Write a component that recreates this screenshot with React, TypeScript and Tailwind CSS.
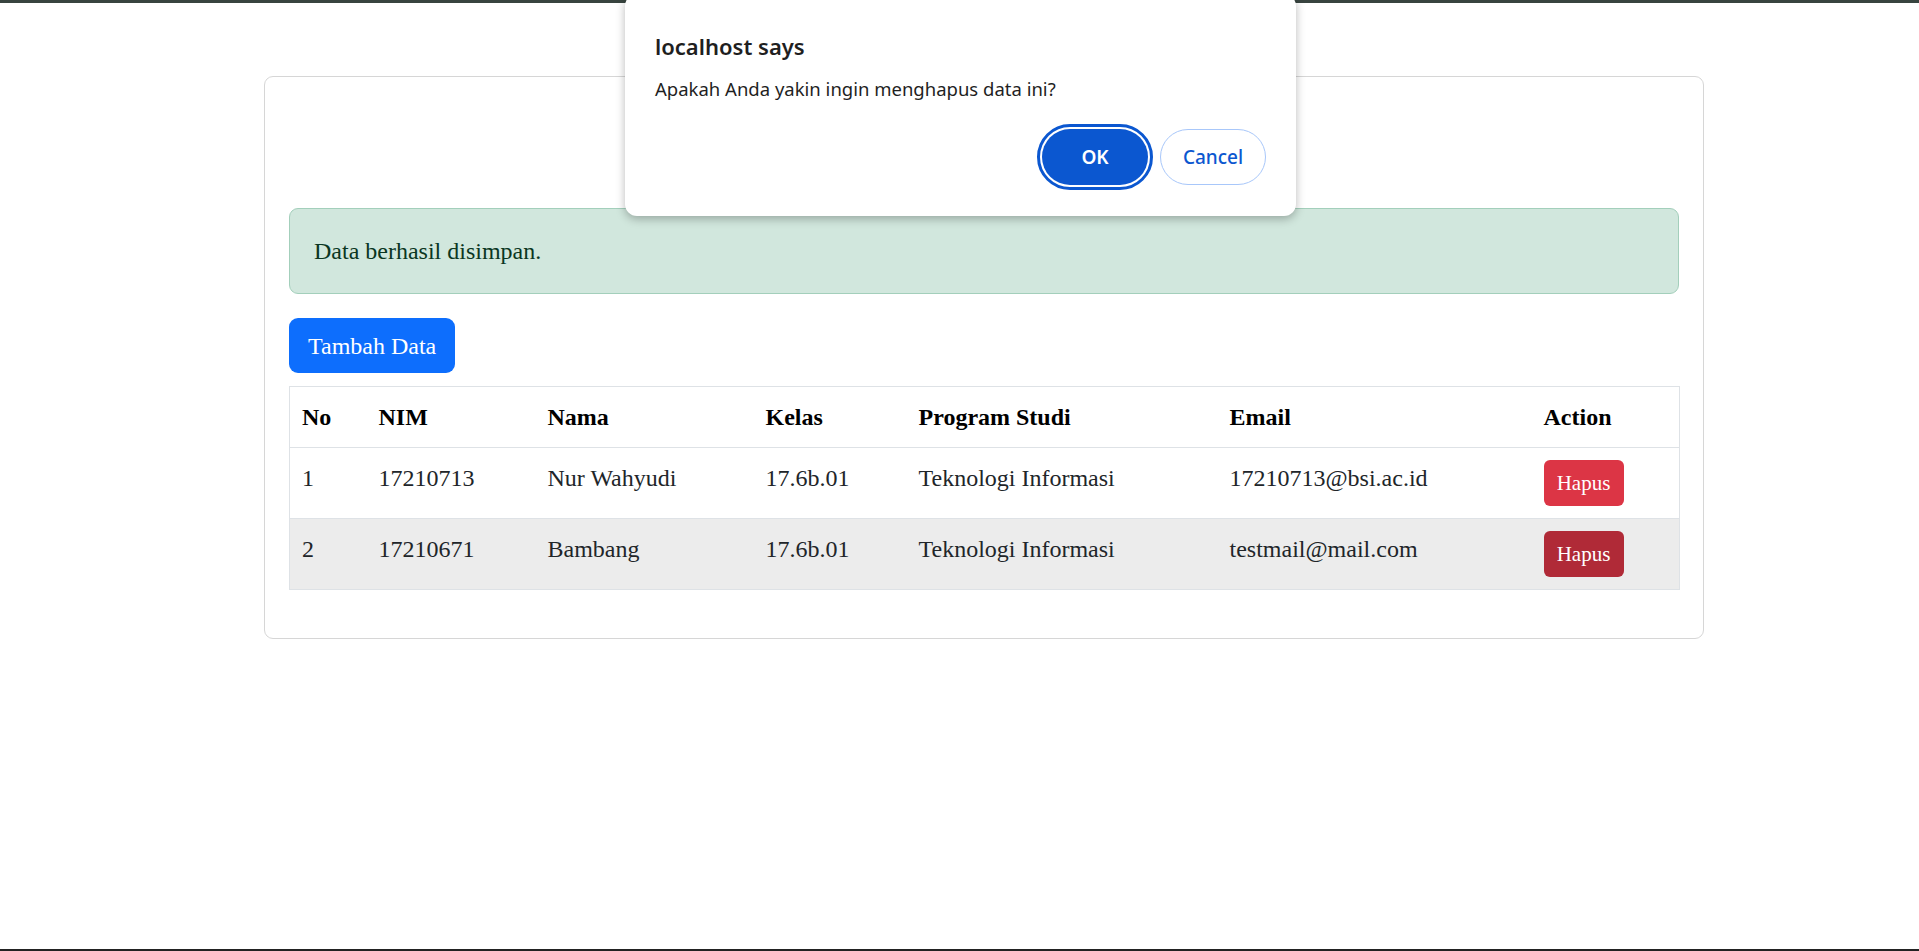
import React from 'react';

const mahasiswa = [
  { no: 1, nim: '17210713', nama: 'Nur Wahyudi', kelas: '17.6b.01', prodi: 'Teknologi Informasi', email: '17210713@bsi.ac.id' },
  { no: 2, nim: '17210671', nama: 'Bambang', kelas: '17.6b.01', prodi: 'Teknologi Informasi', email: 'testmail@mail.com' },
];

const headers = ['No', 'NIM', 'Nama', 'Kelas', 'Program Studi', 'Email', 'Action'];
const widths = ['w-[77px]', 'w-[169px]', 'w-[218px]', 'w-[153px]', 'w-[311px]', 'w-[314px]', 'w-[148px]'];

function ConfirmDialog() {
  return (
    <div className="absolute left-[625px] top-[-6px] w-[671px] bg-white rounded-[12px] shadow-[0_3px_10px_rgba(0,0,0,0.28)] px-[30px] pt-[38px] pb-[31px] font-['Noto_Sans',sans-serif]">
      <div className="text-[22px] leading-[28px] font-semibold text-[#1f1f1f]">localhost says</div>
      <div className="mt-[16px] text-[18.5px] leading-[26px] text-[#1f1f1f]">Apakah Anda yakin ingin menghapus data ini?</div>
      <div className="mt-[27px] flex justify-end gap-[12px]">
        <button className="h-[56px] w-[106px] rounded-full bg-[#0b57d0] text-white text-[19px] font-semibold outline-[3px] outline-solid outline-[#0b57d0] outline-offset-2">
          OK
        </button>
        <button className="h-[56px] w-[106px] rounded-full border border-[#a8c7fa] bg-white text-[#0b57d0] text-[19px] font-medium">
          Cancel
        </button>
      </div>
    </div>
  );
}

export default function App() {
  return (
    <div className="relative h-[951px] flex flex-col bg-white overflow-hidden font-['Liberation_Serif',serif]">
      <div className="h-[3px] bg-[#38443f]" />

      <main className="flex-1 pt-[73px]">
        <div className="ml-[264px] w-[1440px] border border-[#d6d6d6] rounded-[9px] p-[24px]">
          {/* judul (tertutup dialog) */}
          <div className="h-[107px]" />

          <div className="mb-[24px] rounded-[9px] border border-[#a3cfbb] bg-[#d1e7dd] px-[24px] py-[24px] text-[24px] leading-[36px] text-[#0a3622]">
            Data berhasil disimpan.
          </div>

          <button className="mb-[13px] h-[55px] px-[19px] rounded-[9px] bg-[#0d6efd] text-white text-[24px] leading-[36px]">
            Tambah Data
          </button>

          <table className="mb-[24px] w-full table-fixed border-collapse border border-[#dee2e6] text-[24px] leading-[36px] text-[#212529]">
            <colgroup>
              {widths.map((w, i) => (
                <col key={i} className={w} />
              ))}
            </colgroup>
            <thead>
              <tr className="border-b border-[#dee2e6]">
                {headers.map(h => (
                  <th key={h} className="p-[12px] text-left align-top font-bold text-black">{h}</th>
                ))}
              </tr>
            </thead>
            <tbody>
              {mahasiswa.map((m, i) => {
                const hovered = i === 1;
                return (
                  <tr key={m.nim} className={`border-b border-[#dee2e6] ${hovered ? 'bg-[#ececec]' : 'bg-white'}`}>
                    <td className="p-[12px] align-top">{m.no}</td>
                    <td className="p-[12px] align-top">{m.nim}</td>
                    <td className="p-[12px] align-top">{m.nama}</td>
                    <td className="p-[12px] align-top">{m.kelas}</td>
                    <td className="p-[12px] align-top">{m.prodi}</td>
                    <td className="p-[12px] align-top">{m.email}</td>
                    <td className="p-[12px] align-top">
                      <button className={`block h-[46px] w-[80px] rounded-[6px] text-white text-[21px] leading-[30px] ${hovered ? 'bg-[#b02a37]' : 'bg-[#dc3545]'}`}>
                        Hapus
                      </button>
                    </td>
                  </tr>
                );
              })}
            </tbody>
          </table>
        </div>
      </main>

      <div className="h-[2px] bg-[#222]" />

      <ConfirmDialog />
    </div>
  );
}
